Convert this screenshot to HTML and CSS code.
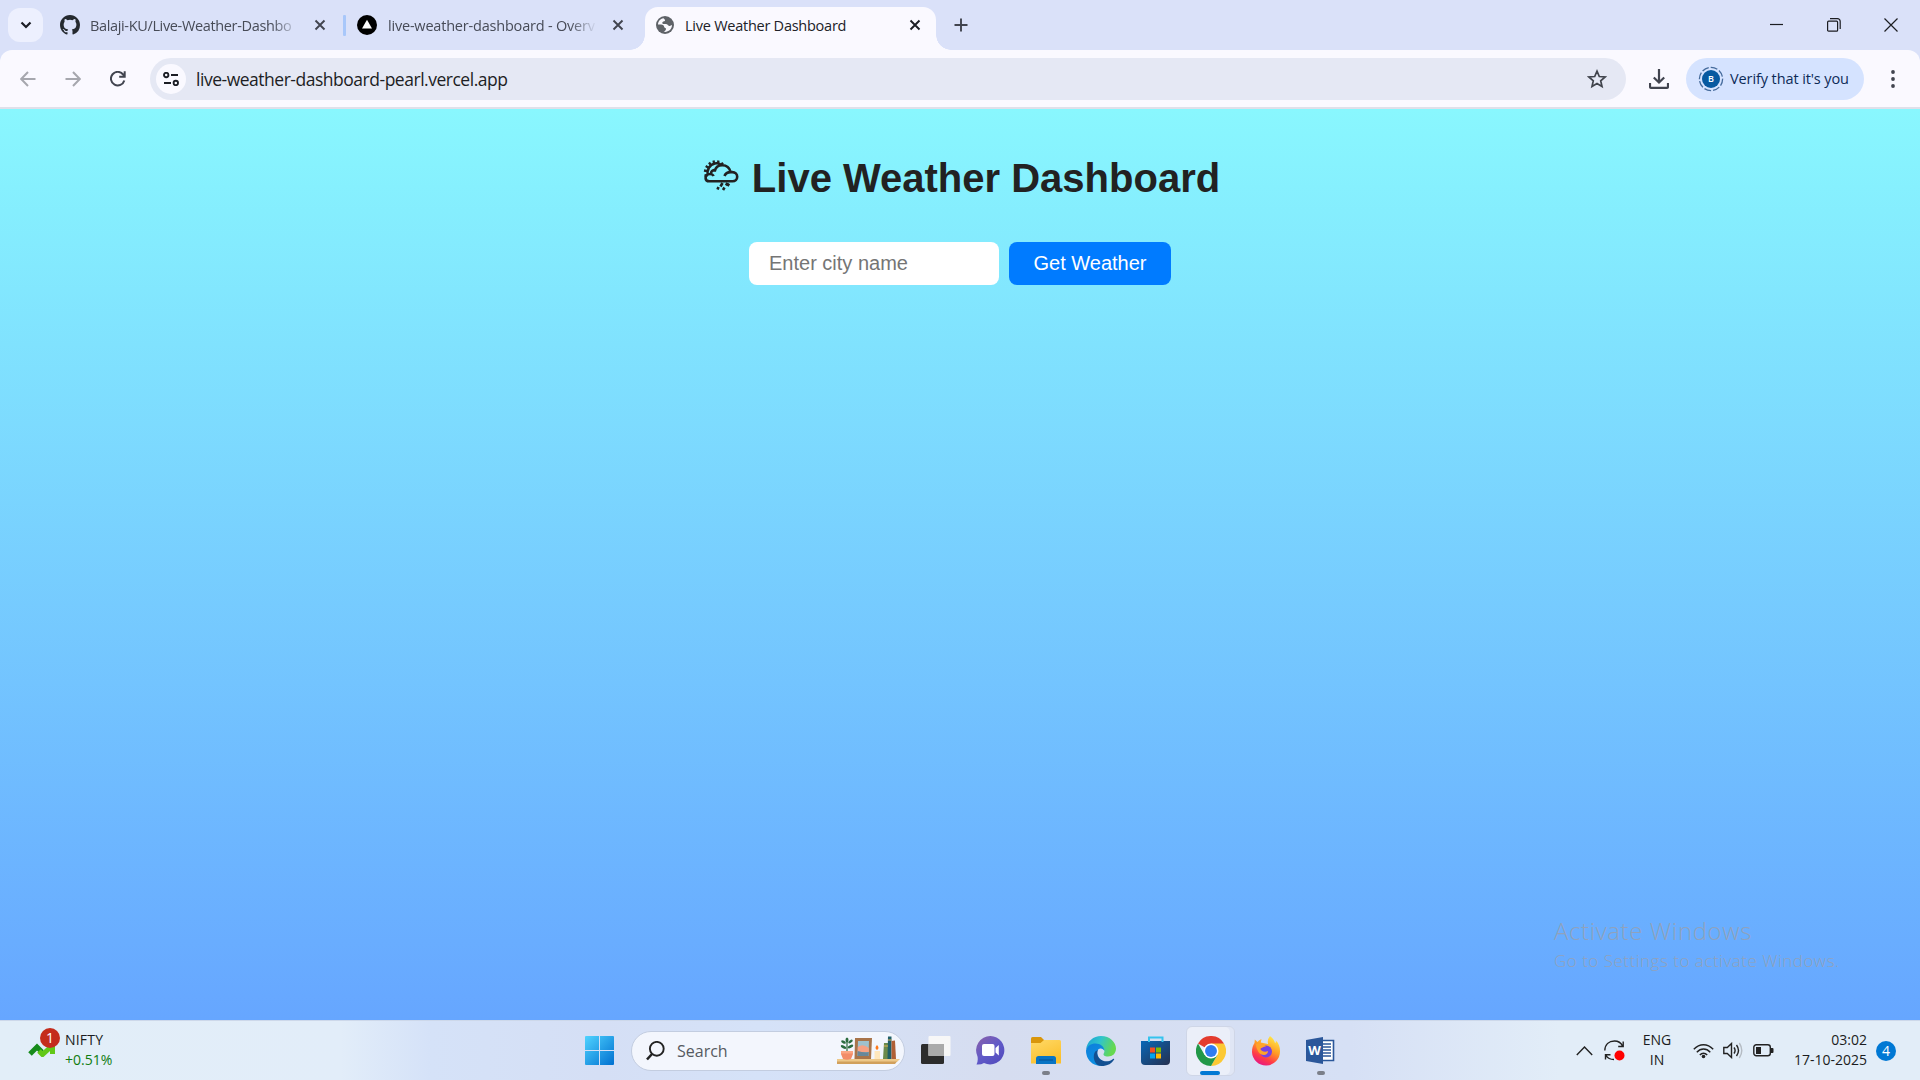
FILE: index.html
```html
<!DOCTYPE html>
<html lang="en">
<head>
<meta charset="utf-8">
<title>Live Weather Dashboard</title>
<link rel="stylesheet" href="styles.css">
</head>
<body>
<header class="tabstrip">
  <div class="tab-search"><svg width="12" height="8" viewBox="0 0 12 8"><path d="M1.5 1.5 6 6l4.500-4.500" fill="none" stroke="#1b1d24" stroke-width="2.200"/></svg></div>
  <div class="tab tab-one">
    <svg width="20" height="20" viewBox="0 0 16 16"><path fill="#24292f" d="M8 0C3.580 0 0 3.580 0 8c0 3.540 2.290 6.530 5.470 7.590.4.070.55-.17.55-.38 0-.19-.010-.82-.010-1.490-2.010.37-2.530-.49-2.690-.94-.090-.23-.48-.94-.82-1.130-.28-.15-.68-.52-.010-.53.63-.010 1.080.58 1.230.82.72 1.210 1.870.87 2.330.66.070-.52.28-.87.51-1.070-1.780-.2-3.640-.89-3.640-3.950 0-.87.31-1.590.82-2.150-.080-.2-.36-1.020.080-2.120 0 0 .67-.21 2.200.82a7.600 7.600 0 0 1 4 0c1.530-1.040 2.200-.82 2.200-.82.44 1.100.16 1.920.080 2.120.51.56.82 1.270.82 2.150 0 3.070-1.870 3.750-3.650 3.950.29.25.54.73.54 1.480 0 1.070-.010 1.930-.010 2.200 0 .21.15.46.55.38A8 8 0 0 0 16 8c0-4.420-3.580-8-8-8z"/></svg>
    <span class="tab-title fade">Balaji-KU/Live-Weather-Dashbo</span>
    <svg class="close" width="12" height="12" viewBox="0 0 12 12"><path d="m1.500 1.500 9 9m0-9-9 9"/></svg>
  </div>
  <i class="tab-divider"></i>
  <div class="tab tab-two">
    <svg width="20" height="20" viewBox="0 0 20 20"><circle cx="10" cy="10" r="10"/><path d="m10 4.800 5 8.700H5z" fill="#fff"/></svg>
    <span class="tab-title fade">live-weather-dashboard - Overv</span>
    <svg class="close" width="12" height="12" viewBox="0 0 12 12"><path d="m1.500 1.500 9 9m0-9-9 9"/></svg>
  </div>
  <div class="tab tab-active">
    <svg width="18" height="18" viewBox="0 0 18 18"><circle cx="9" cy="9" r="9" fill="#5f6368"/><path d="M7.500 2.200C4 2.800 2 5.500 2 8.600c2.500-.3 4.600-.2 5.600 1 .8 1 .3 2.100 1.600 2.300 1 .2.900 1.100.5 2.100-.3.800-1.300 1.200-2.100 1.800 4.200.8 8.400-2 8.400-6.700-1.200.6-2 1.100-3.200.6-1.300-.6-1.500-1.700-2.800-1.700-1.500 0-3 .4-3.600-.7-.5-1 .5-1.900 1.800-2.100 1-.2 1-1.200.5-1.800-.4-.5-.9-.8-1.200-1.200z" fill="#faf9ff"/></svg>
    <span class="tab-title">Live Weather Dashboard</span>
    <svg class="close" width="12" height="12" viewBox="0 0 12 12"><path d="m1.500 1.500 9 9m0-9-9 9"/></svg>
  </div>
  <svg class="new-tab" width="14" height="14" viewBox="0 0 14 14"><path d="M7 .5v13M.5 7h13" stroke="#41444f" stroke-width="1.900"/></svg>
  <div class="window-buttons">
    <svg width="14" height="14" viewBox="0 0 14 14"><path d="M0 6.500h13"/></svg>
    <svg width="14" height="14" viewBox="0 0 14 14"><rect x=".6" y="3.200" width="10" height="10" rx="1"/><path d="M3 .7h7.500a2.700 2.700 0 0 1 2.700 2.700V11"/></svg>
    <svg width="14" height="14" viewBox="0 0 14 14"><path d="m.5.5 13 13m0-13-13 13"/></svg>
  </div>
</header>

<nav class="toolbar">
  <svg class="nav-icon dim" width="16" height="16" viewBox="0 0 16 16"><path d="M15.500 8H1.500M8 1 1.200 8 8 15"/></svg>
  <svg class="nav-icon dim" width="16" height="16" viewBox="0 0 16 16"><path d="M.5 8h14M8 1l6.800 7L8 15"/></svg>
  <svg class="nav-icon" width="16" height="16" viewBox="0 0 16 16"><path d="M14.300 9.500A6.800 6.800 0 1 1 13.200 3.600L14.500 5M14.700.3v5.500H9.200"/></svg>
  <div class="address">
    <div class="site-info"><svg width="16" height="14" viewBox="0 0 16 14" fill="none" stroke="#1b1d24" stroke-width="1.900"><circle cx="3.200" cy="3" r="2.200"/><path d="M8 3h7M1 11h7"/><circle cx="12.800" cy="11" r="2.200"/></svg></div>
    <span class="url">live-weather-dashboard-pearl.vercel.app</span>
    <svg width="20" height="20" viewBox="0 0 20 20"><path d="m10 2.200 2.300 5.300 5.800.5-4.400 3.800 1.300 5.600-5-3-5 3 1.300-5.600L1.900 8l5.800-.5z" fill="none" stroke="#41444c" stroke-width="1.700"/></svg>
  </div>
  <svg class="download" width="20" height="20" viewBox="0 0 20 20" fill="none" stroke="#41444f" stroke-width="2.200"><path d="M10 0v13M4.800 8.500 10 13.500l5.200-5M1 14v3.500c0 .8.500 1.300 1.300 1.300h15.400c.8 0 1.300-.5 1.300-1.300V14"/></svg>
  <div class="verify">
    <svg width="26" height="26" viewBox="0 0 26 26"><circle cx="13" cy="13" r="11.600" fill="none" stroke="#456b9c" stroke-width="1.300" stroke-dasharray="7 2"/><circle cx="13" cy="13" r="9" fill="#0759a0"/><text x="13" y="16.300" text-anchor="middle" class="initial">B</text></svg>
    <span>Verify that it's you</span>
  </div>
  <svg class="menu" width="6" height="20" viewBox="0 0 6 20" fill="#41444f"><circle cx="3" cy="3" r="1.900"/><circle cx="3" cy="10" r="1.900"/><circle cx="3" cy="17" r="1.900"/></svg>
</nav>

<main class="page">
  <h1><svg width="36" height="32" viewBox="0 0 36 32" fill="none" stroke="#222" stroke-width="2.600"><path d="M6.500 22.300h23c2.700 0 4.700-1.900 4.700-4.500 0-2.700-2-4.700-4.900-4.700h-1.600C26.500 8.700 23.300 6.300 19.300 6.300c-4.100 0-7 2.500-7.600 6.300M6.500 22.300c-2.400 0-3.900-1.500-3.900-3.400 0-2.300 1.700-3.900 4.400-3.900 1.800 0 3 .7 3.700 2M21.500 17c.8-2.500 3-3.900 6.300-3.900M4.800 16c-1.200-5 1.700-10.500 7-11.600 2.500-.5 4.700 0 6.500 1.500M8 15c-.2-2.500 1.500-4 4.400-4.100"/><path d="M1.500 16.500h3M1 11.500l3.500.7M2.700 7 5.500 8.700M6 3.500l2 2.700M10.500 1.500l.7 3.200M15.500 1.500l-.7 3.300M20 3.700l-2.300 2.600" stroke-width="2.300"/><path d="m19.500 24-2 3.500m7-3.500-1.500 2.500m-1.500 2-1.500 2.500m-4.500-3-1 2.500m11.500-6-1.500 2.500"/></svg><span>Live Weather Dashboard</span></h1>
  <form class="search-form">
    <input class="city" type="text" placeholder="Enter city name">
    <button class="go" type="button">Get Weather</button>
  </form>
  <aside class="activate"><p class="activate-title">Activate Windows</p><p class="activate-text">Go to Settings to activate Windows.</p></aside>
</main>

<footer class="taskbar">
  <div class="widget">
    <div class="stock"><svg width="30" height="28" viewBox="0 0 30 28"><path d="m3 25 7-7 5 5" fill="none" stroke="#168b1b" stroke-width="5"/><path d="m12 22 3.500 3.500L26 16" fill="none" stroke="#62c817" stroke-width="5"/><path d="M21 13h7v12h-5v-6z" fill="#62c817"/></svg><b class="alert">1</b></div>
    <div class="widget-text"><span class="nifty">NIFTY</span><span class="gain">+0.51%</span></div>
  </div>
  <div class="dock">
    <svg class="start" width="29" height="29" viewBox="0 0 29 29"><defs><linearGradient id="win" gradientUnits="userSpaceOnUse" x1="0" y1="0" x2="29" y2="29"><stop stop-color="#4fd3ff"/><stop offset="1" stop-color="#0070d0"/></linearGradient></defs><path fill="url(#win)" d="M1 0h13v14H0V1a1 1 0 0 1 1-1zm14 0h13a1 1 0 0 1 1 1v13H15zM0 15h14v14H1a1 1 0 0 1-1-1zm15 0h14v13a1 1 0 0 1-1 1H15z"/></svg>
    <div class="searchbox">
      <svg width="19" height="20" viewBox="0 0 19 20" fill="none" stroke="#222"><circle cx="10.800" cy="7.800" r="6.900" stroke-width="1.900"/><path d="m6 13-5 5.500" stroke-width="2.600"/></svg>
      <span>Search</span>
      <svg class="shelf" width="63" height="30" viewBox="0 0 63 30">
        <path d="M0 23h63l-3 3H0z" fill="#edc889"/><path d="M0 25.500h60L58 28H0z" fill="#d1a05c"/>
        <path d="M10 15V3" stroke="#2c6b3c" stroke-width="1.200"/><g fill="#2b6c3f"><ellipse cx="10" cy="4" rx="1.500" ry="2.600"/><ellipse cx="6.500" cy="6" rx="2.600" ry="1.300" transform="rotate(30 6.500 6)"/><ellipse cx="13.500" cy="5.500" rx="2.600" ry="1.300" transform="rotate(-35 13.500 5.500)"/><ellipse cx="6.500" cy="11" rx="3" ry="1.400" transform="rotate(25 6.500 11)"/><ellipse cx="13.500" cy="10.500" rx="3" ry="1.400" transform="rotate(-25 13.500 10.500)"/></g>
        <path d="M4 15h12v3l-2 5q-4 1.500-8 0l-2-5z" fill="#f28c68"/><path d="M4 15h12v2.500H4z" fill="#fba583"/>
        <path d="M18 2h17l-1 21H17.500z" fill="#a8744a"/><path d="M21 5h11l-.5 15H20.500z" fill="#9fc1cd"/><path d="M20.800 11q5-4 11 1v4h-11z" fill="#f7a183"/><path d="m20.500 20 .3-5q6 2 10.900 1l-.2 4z" fill="#68879a"/>
        <path d="M37.500 15h5.500v8h-5.500z" fill="#ffe7bc"/><path d="M40 9q3 3 0 5-3-2 0-5z" fill="#ff7a1a"/>
        <path d="M47 7h4v16h-5z" fill="#6b8a4c"/><path d="M51 .5h3.500V23h-4z" fill="#205f68"/><path d="m54.500 5 3.500-.5 1 18.500h-4.500z" fill="#b05f35"/><path d="M51 4h3.500M47 10h4" stroke="#e0b457"/>
      </svg>
    </div>
    <div class="slot"><svg width="30" height="29" viewBox="0 0 30 29"><rect y="8" width="23" height="20" rx="1.500" fill="#2c2c2c"/><rect x="7.500" width="22" height="20" rx="1" fill="#f7f7f7"/><path d="M7.500 8H23v12H7.500z" fill="#aaa"/></svg></div>
    <div class="slot"><svg width="29" height="29" viewBox="0 0 29 29"><defs><linearGradient id="chat" x1="0" y1="0" x2=".8" y2="1"><stop stop-color="#8c61a8"/><stop offset=".55" stop-color="#615ac8"/><stop offset="1" stop-color="#524bbd"/></linearGradient></defs><path d="M14.500 0A14.200 14.200 0 1 1 8 27q-3 1.800-7.500 1.500Q2.300 25 1.500 20.500A14.300 14.300 0 0 1 14.500 0z" fill="url(#chat)"/><rect x="6" y="8" width="12.500" height="12" rx="2" fill="#fff"/><path d="m19.500 12 3.300-3v10.500l-3.300-3z" fill="#fff"/></svg></div>
    <div class="slot open"><svg width="30" height="27" viewBox="0 0 30 27"><defs><linearGradient id="fold" x1="0" y1="0" x2=".5" y2="1"><stop stop-color="#ffd967"/><stop offset="1" stop-color="#fbc02d"/></linearGradient></defs><path d="M0 1.500Q0 0 1.500 0H10l3 3v5H0z" fill="#d9960b"/><path d="M0 6h9.500l3.500-3h15.500Q30 3 30 4.500V26.500H0z" fill="url(#fold)"/><path d="M5 27v-5.500Q5 19 7.500 19h15q2.500 0 2.500 2.500V27z" fill="#0874c4"/><path d="M8 23h14" stroke="#07569a" stroke-width="1.200"/></svg></div>
    <div class="slot"><svg width="30" height="30" viewBox="0 0 30 30"><defs><linearGradient id="e1" x1="0" y1="0" x2="1" y2=".3"><stop stop-color="#199ed5"/><stop offset=".5" stop-color="#30c4cc"/><stop offset="1" stop-color="#66d94f"/></linearGradient><linearGradient id="e2" x1="0" y1="0" x2=".7" y2="1"><stop stop-color="#0e7edb"/><stop offset="1" stop-color="#0b93e3"/></linearGradient></defs><path d="M0 14C1 5 7.500 0 15 0c9 0 15 6.500 15 12.500 0 5-3.500 8-8 8-3.500 0-5.500-1.300-4-3.500 1.600-3-1-6-5-6C7.500 8.500 1.500 10 0 14z" fill="url(#e1)"/><path d="M0 14.500c1-4.500 5-7 9.500-7 5 0 9 3.500 9 7.500-1-2-3-3-5-2.300-2.500 1-3 4-1.500 7.300 2 5 7 7 12 5.500C20 30 14 31 8.500 28.500 3 26 0 20.500 0 14.500z" fill="url(#e2)"/><path d="M12 14c-2 4 0 8.500 4.500 10.500 4 1.800 8 .5 10.500-1.500 1-.8 1.500 0 1 .8-3 5-9 7-14.500 6-5.500-2-7.500-10-4-14.500z" fill="#124f91"/></svg></div>
    <div class="slot"><svg width="29" height="29" viewBox="0 0 29 29"><defs><linearGradient id="store" x1="0" y1="0" x2="1" y2="1"><stop stop-color="#0867b7"/><stop offset="1" stop-color="#26304f"/></linearGradient></defs><path d="M0 5h29v20q0 4-4 4H4q-4 0-4-4z" fill="url(#store)"/><path d="M8 6V1.500h13.500V6" fill="none" stroke="#35c3ee" stroke-width="2"/><path d="M9 11.500h5v5H9z" fill="#f25022"/><path d="M15 11.500h5v5h-5z" fill="#7fba00"/><path d="M9 17.500h5v5H9z" fill="#00a4ef"/><path d="M15 17.500h5v5h-5z" fill="#ffb900"/></svg></div>
    <div class="slot current"><svg width="30" height="30" viewBox="0 0 48 48"><path d="M24 24 3.200 12A24 24 0 0 1 44.800 12z" fill="#e33b2e"/><path d="M44.800 12A24 24 0 0 1 24 48l10.400-18L24 12z" fill="#fcc934"/><path d="M3.200 12A24 24 0 0 0 24 48l10.400-18H13.600z" fill="#229848"/><circle cx="24" cy="24" r="12" fill="#fff"/><circle cx="24" cy="24" r="9.500" fill="#2f7cf0"/></svg></div>
    <div class="slot"><svg width="30" height="30" viewBox="0 0 30 30"><defs><linearGradient id="fx" x1=".8" y1="0" x2=".3" y2="1"><stop stop-color="#fff14a"/><stop offset=".45" stop-color="#ff9a24"/><stop offset=".75" stop-color="#ff3b47"/><stop offset="1" stop-color="#e51587"/></linearGradient></defs><path d="M19 0c3 2.500 4.500 4.500 5 7 1-.2 1-1.500.8-2.500C28 7.500 29 11 29 15a14 14 0 0 1-28 1c0-4 .8-6.500 2.500-9l.3-3.500L6.500 6q1.500-2 4-3l-.7 3.500L17 8q-1-4.500 2-8z" fill="url(#fx)"/><circle cx="15" cy="15.500" r="6" fill="#7542e5"/><path d="M5 8c4-2 8 .5 10 2.500-3 .2-4 1.500-6 2 1 3 5 4 8 2.500 0 5-7 5-9.500 1C6 13.500 5 11 5 8z" fill="#ffa32a"/></svg></div>
    <div class="slot open"><svg width="29" height="27" viewBox="0 0 29 27"><path d="M14 3.500h13.500v20H14z" fill="#fff" stroke="#2b579a" stroke-width="1.600"/><path d="M16 7h9M16 10h9M16 13h9M16 16h9M16 19h9" stroke="#2b579a" stroke-width="1.400"/><path d="M0 3 17 0v27L0 24z" fill="#2b579a"/><text x="8.500" y="18" text-anchor="middle" class="word">W</text></svg></div>
  </div>
  <div class="tray">
    <svg width="17" height="10" viewBox="0 0 17 10"><path d="m.8 9 7.700-8 7.700 8"/></svg>
    <svg class="sync" width="21" height="21" viewBox="0 0 21 21"><path d="M.8 10.500C1 4.500 5 1 10.500 1c3.500 0 6.500 1.800 8 5M19.200 1.500v5h-5M1.500 19.500v-4.800h5M2 15.500c1.500 2.500 4 4 8 4"/><circle cx="15.500" cy="15.500" r="5" fill="red" stroke="none"/></svg>
    <div class="lang"><span>ENG</span><span>IN</span></div>
    <svg class="wifi" width="21" height="16" viewBox="0 0 21 16"><path d="M.8 6.200C6.500.2 14.500.2 20.200 6.200M3.800 9.200c4-4.200 9.500-4.200 13.500 0M6.800 12c2.200-2.300 5.200-2.300 7.400 0"/><circle cx="10.500" cy="13.500" r="1.800" fill="#222" stroke="none"/></svg>
    <svg class="sound" width="20" height="17" viewBox="0 0 20 17"><path d="M.8 5.500h3.500l4.200-4v14l-4.200-4H.8zM11 5.500q2.200 3 0 6M13.500 3q4 5.500 0 11"/><path d="M16.300 1q5 7.500 0 15" stroke="#b5bcc4"/></svg>
    <svg class="battery" width="21" height="13" viewBox="0 0 21 13"><rect x=".8" y=".8" width="16.500" height="11" rx="2.500"/><path d="M3 3h5v7H3zM18 4h1.500q1 0 1 1v3q0 1-1 1H18z" fill="#222" stroke="none"/></svg>
    <div class="clock"><span class="time">03:02</span><span class="date">17-10-2025</span></div>
    <b class="count">4</b>
  </div>
</footer>
</body>
</html>
```
FILE: styles.css
```css
* { box-sizing: border-box; }
html, body { margin: 0; width: 1920px; height: 1080px; overflow: hidden; }
body { display: flex; flex-direction: column; background: #dae1f9; font-family: "Open Sans", "Noto Sans", sans-serif; }
svg { display: block; flex: none; }

.tabstrip { height: 50px; flex: none; display: flex; align-items: center; padding-left: 8px; }
.tab-search { width: 35px; height: 34px; border-radius: 12px; background: #edf0fe; display: flex; align-items: center; justify-content: center; }
.tab { display: flex; align-items: center; color: #474b57; font-size: 14.5px; white-space: nowrap; }
.tab-title { letter-spacing: -0.25px; line-height: 22px; padding-top: 1px; }
.fade { width: 209px; margin-left: 10px; -webkit-mask-image: linear-gradient(90deg, #000 87%, transparent 100%); mask-image: linear-gradient(90deg, #000 87%, transparent 100%); }
.tab-one .fade { letter-spacing: -0.35px; }
.tab-two .fade { letter-spacing: -0.2px; margin-left: 11px; }
.close { stroke: #41444f; stroke-width: 1.9; }
.tab-one { margin-left: 17px; }
.tab-one .close { margin-left: 15px; }
.tab-divider { width: 3px; height: 21px; margin-left: 17px; background: #a8c7fa; border-radius: 1px; }
.tab-two { margin-left: 11px; }
.tab-two .close { margin-left: 15px; }
.tab-active { position: relative; align-self: flex-end; width: 291px; height: 43px; margin-left: 21px; padding: 0 15px 7px 11px; border-radius: 13px 13px 0 0; background: #faf9ff; color: #202127; }
.tab-active::before, .tab-active::after { content: ""; position: absolute; bottom: 0; width: 15px; height: 15px; }
.tab-active::before { left: -15px; background: radial-gradient(circle at 0 0, transparent 14.5px, #faf9ff 15px); }
.tab-active::after { right: -15px; background: radial-gradient(circle at 100% 0, transparent 14.5px, #faf9ff 15px); }
.tab-active .tab-title { margin-left: 11px; }
.tab-active .close { margin-left: auto; stroke: #1b1d24; }
.new-tab { margin-left: 18px; }
.window-buttons { margin-left: auto; padding-right: 22px; display: flex; gap: 43px; }
.window-buttons svg { fill: none; stroke: #1c1d22; stroke-width: 1.2; }

.toolbar { height: 59px; flex: none; display: flex; align-items: center; padding: 0 24px 0 20px; background: #faf9ff; border-bottom: 2px solid #dfe0ea; border-radius: 12px 12px 0 0; }
.nav-icon { fill: none; stroke: #41444f; stroke-width: 2; margin-right: 29px; }
.dim { stroke: #a6a7ae; }
.address { width: 1476px; height: 42px; margin-left: -5px; padding: 0 19px 0 6px; border-radius: 21px; background: #e5e8f4; display: flex; align-items: center; }
.site-info { width: 30px; height: 30px; border-radius: 50%; background: #faf9ff; display: flex; align-items: center; justify-content: center; }
.url { flex: 1; margin-left: 10px; padding-top: 1px; color: #1d1e24; font-size: 17.5px; letter-spacing: -0.48px; }
.download { margin-left: 23px; }
.verify { width: 178px; height: 42px; margin-left: 17px; padding-left: 12px; border-radius: 21px; background: #d5e3ff; display: flex; align-items: center; gap: 6px; color: #0d2b58; font-size: 14.5px; letter-spacing: -0.1px; white-space: nowrap; }
.initial { fill: #fff; font: 600 9px "Open Sans", sans-serif; }
.menu { margin-left: auto; }

.page { position: relative; flex: 1; padding-top: 46px; background: linear-gradient(#89f7fe, #66a6ff); font-family: "Liberation Sans", Arial, sans-serif; }
h1 { margin: 0; height: 46px; display: flex; justify-content: center; gap: 13px; padding-left: 3px; color: #222; font-size: 40px; line-height: 46px; }
h1 svg { margin-top: 4px; }
.search-form { display: flex; justify-content: center; gap: 10px; margin-top: 41px; }
.city { width: 250px; height: 43px; padding: 0 20px; border: 0; border-radius: 8px; background: #fff; font: 20px "Liberation Sans", Arial, sans-serif; }
.city::placeholder { color: #757575; }
.go { width: 162px; height: 43px; padding: 0; border: 0; border-radius: 8px; background: #007bff; color: #fff; font: 20px "Liberation Sans", Arial, sans-serif; }
.activate { position: absolute; left: 1554px; top: 804px; color: #90a2bc; font-family: "Open Sans", sans-serif; font-weight: 300; white-space: nowrap; }
.activate p { margin: 0; }
.activate-title { font-size: 24px; line-height: 36px; letter-spacing: 0.6px; }
.activate-text { font-size: 17px; line-height: 24px; letter-spacing: 0.5px; }

.taskbar { height: 60px; flex: none; display: grid; grid-template-columns: 585px 763px 1fr; border-top: 1px solid #cdd8ea; background: linear-gradient(90deg, #e2eef8 0, #e2edf9 340px, #d5e2f8 430px, #d5dff5 600px, #d5e2f8 760px, #d6ddf0 1000px, #d6e0f5 1350px, #e2edf8 1560px, #e2edf8); color: #1b1c20; font-size: 14px; }
.widget { display: flex; padding: 8px 0 0 27px; }
.stock { position: relative; width: 38px; }
.alert { position: absolute; left: 13px; top: -1px; width: 20px; height: 20px; border-radius: 50%; background: #c42b1c; color: #fff; font-size: 14px; font-weight: 400; line-height: 20px; text-align: center; }
.widget-text { display: flex; flex-direction: column; line-height: 20px; padding-top: 1px; }
.nifty { letter-spacing: 0.2px; }
.gain { color: #107c10; }
.dock { display: flex; align-items: center; }
.searchbox { width: 274px; height: 40px; margin-left: 17px; padding: 0 4px 0 14px; border: 1px solid #c3cde0; border-radius: 20px; background: #f3f6fd; display: flex; align-items: center; color: #565a61; font-size: 16px; }
.searchbox span { margin-left: 12px; }
.shelf { margin-left: auto; }
.slot { width: 55px; height: 50px; display: flex; align-items: center; justify-content: center; position: relative; }
.searchbox + .slot { margin-left: 3px; }
.current { width: 49px; margin: 0 3px; border: 1px solid #cfd6e7; border-radius: 6px; background: #ebeff9; box-shadow: inset -4px 0 #e0e6f5; }
.open::after, .current::after { content: ""; position: absolute; bottom: 1px; left: 24px; width: 8px; height: 4px; border-radius: 2px; background: #7b7f89; }
.current::after { left: 13px; bottom: 0; width: 20px; background: #0078d4; }
.word { fill: #fff; font: 700 13px "Open Sans", sans-serif; }
.tray { display: flex; align-items: center; padding-left: 228px; }
.tray svg { fill: none; stroke: #222; stroke-width: 1.4; }
.tray .sync { margin-left: 11px; }
.lang { width: 32px; margin: -1px 0 0 16px; line-height: 20px; display: flex; flex-direction: column; align-items: center; }
.tray .wifi { margin-left: 20px; }
.tray .sound { margin-left: 9px; }
.tray .battery { margin-left: 10px; }
.clock { width: 92px; margin: -2px 0 0 1px; line-height: 20px; display: flex; flex-direction: column; align-items: flex-end; }
.count { width: 20px; height: 20px; margin-left: 9px; border-radius: 50%; background: #0078d4; color: #fff; font-size: 14px; font-weight: 400; line-height: 20px; text-align: center; }
```
